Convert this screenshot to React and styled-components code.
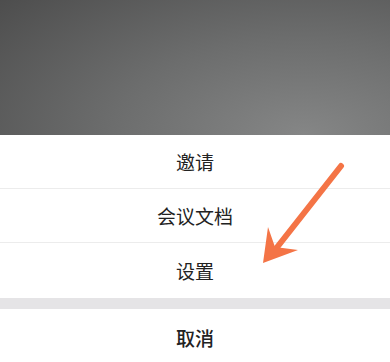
import React from "react";
import styled, { createGlobalStyle } from "styled-components";

const Global = createGlobalStyle`
  html, body {
    margin: 0;
    padding: 0;
    background: #fff;
  }
  body {
    font-family: "Noto Sans CJK SC", "Noto Sans", sans-serif;
  }
`;

const Screen = styled.div`
  position: relative;
  width: 390px;
  height: 362px;
  overflow: hidden;
  display: flex;
  flex-direction: column;
`;

const Backdrop = styled.div`
  height: 135px;
  flex-shrink: 0;
  background: radial-gradient(ellipse 110% 160% at 78% 100%, #858686 0%, #6c6d6d 45%, #4a4a4a 100%);
`;

const Sheet = styled.div`
  display: flex;
  flex-direction: column;
  background: #fff;
`;

const Item = styled.div`
  height: ${(p) => p.h}px;
  flex-shrink: 0;
  display: flex;
  align-items: center;
  justify-content: center;
  font-size: 19px;
  font-weight: ${(p) => (p.bold ? 500 : 400)};
  color: #222;
  border-bottom: ${(p) => (p.line ? "1px solid #ececec" : "none")};
  box-sizing: border-box;
`;

const Gap = styled.div`
  height: 11px;
  flex-shrink: 0;
  background: #e5e4e6;
`;

const Arrow = styled.svg`
  position: absolute;
  left: 255px;
  top: 155px;
  width: 100px;
  height: 120px;
`;

export default function App() {
  return (
    <Screen>
      <Global />
      <Backdrop />
      <Sheet>
        <Item h={54} line>邀请</Item>
        <Item h={54} line>会议文档</Item>
        <Item h={55}>设置</Item>
        <Gap />
        <Item h={56} bold>取消</Item>
      </Sheet>
      <Arrow viewBox="0 0 100 120">
        <line x1="86" y1="11" x2="16" y2="100" stroke="#f47446" strokeWidth="6" strokeLinecap="round" />
        <path d="M8 108 L13 72 L20 92 L43 95 Z" fill="#f47446" />
      </Arrow>
    </Screen>
  );
}
